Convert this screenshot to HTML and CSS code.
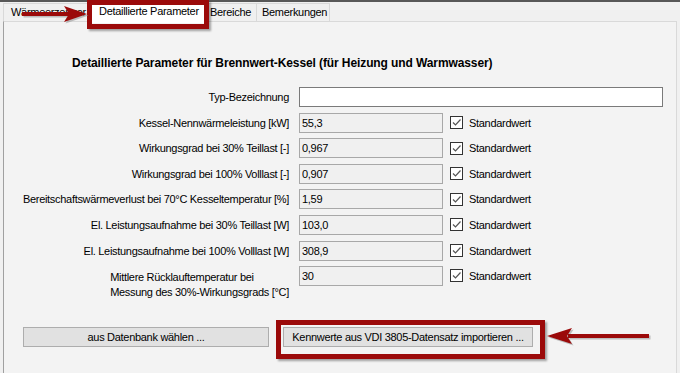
FILE: index.html
```html
<!DOCTYPE html>
<html lang="de">
<head>
    <meta charset="UTF-8">
    <title>Detaillierte Parameter</title>
    <link rel="stylesheet" href="styles.css">
</head>
<body>
    <div class="window">
        <div class="tabs">
            <div class="tab">Wärmeerzeuger</div>
            <div class="tab active">Detaillierte Parameter</div>
            <div class="tab">Bereiche</div>
            <div class="tab">Bemerkungen</div>
        </div>

        <div class="page">
            <h2 class="title">Detaillierte Parameter für Brennwert-Kessel (für Heizung und Warmwasser)</h2>

            <div class="rows">
                <div class="row">
                    <label class="lbl">Typ-Bezeichnung</label>
                    <input class="field wide" type="text" value="">
                </div>
                <div class="row">
                    <label class="lbl">Kessel-Nennwärmeleistung [kW]</label>
                    <input class="field" type="text" value="55,3" readonly>
                    <span class="check"><svg width="11" height="11" viewBox="0 0 11 11"><path d="M2 5.5 L4.5 8 L9.5 2.5" fill="none" stroke="#555" stroke-width="1.2"/></svg></span>
                    <span class="std">Standardwert</span>
                </div>
                <div class="row">
                    <label class="lbl">Wirkungsgrad bei 30% Teillast [-]</label>
                    <input class="field" type="text" value="0,967" readonly>
                    <span class="check"><svg width="11" height="11" viewBox="0 0 11 11"><path d="M2 5.5 L4.5 8 L9.5 2.5" fill="none" stroke="#555" stroke-width="1.2"/></svg></span>
                    <span class="std">Standardwert</span>
                </div>
                <div class="row">
                    <label class="lbl">Wirkungsgrad bei 100% Volllast [-]</label>
                    <input class="field" type="text" value="0,907" readonly>
                    <span class="check"><svg width="11" height="11" viewBox="0 0 11 11"><path d="M2 5.5 L4.5 8 L9.5 2.5" fill="none" stroke="#555" stroke-width="1.2"/></svg></span>
                    <span class="std">Standardwert</span>
                </div>
                <div class="row">
                    <label class="lbl">Bereitschaftswärmeverlust bei 70°C Kesseltemperatur [%]</label>
                    <input class="field" type="text" value="1,59" readonly>
                    <span class="check"><svg width="11" height="11" viewBox="0 0 11 11"><path d="M2 5.5 L4.5 8 L9.5 2.5" fill="none" stroke="#555" stroke-width="1.2"/></svg></span>
                    <span class="std">Standardwert</span>
                </div>
                <div class="row">
                    <label class="lbl">El. Leistungsaufnahme bei 30% Teillast [W]</label>
                    <input class="field" type="text" value="103,0" readonly>
                    <span class="check"><svg width="11" height="11" viewBox="0 0 11 11"><path d="M2 5.5 L4.5 8 L9.5 2.5" fill="none" stroke="#555" stroke-width="1.2"/></svg></span>
                    <span class="std">Standardwert</span>
                </div>
                <div class="row">
                    <label class="lbl">El. Leistungsaufnahme bei 100% Volllast [W]</label>
                    <input class="field" type="text" value="308,9" readonly>
                    <span class="check"><svg width="11" height="11" viewBox="0 0 11 11"><path d="M2 5.5 L4.5 8 L9.5 2.5" fill="none" stroke="#555" stroke-width="1.2"/></svg></span>
                    <span class="std">Standardwert</span>
                </div>
                <div class="row tall">
                    <label class="lbl multi"><span>Mittlere Rücklauftemperatur bei<br>Messung des 30%-Wirkungsgrads [°C]</span></label>
                    <input class="field" type="text" value="30" readonly>
                    <span class="check"><svg width="11" height="11" viewBox="0 0 11 11"><path d="M2 5.5 L4.5 8 L9.5 2.5" fill="none" stroke="#555" stroke-width="1.2"/></svg></span>
                    <span class="std">Standardwert</span>
                </div>
            </div>

            <div class="buttons">
                <button class="btn db">aus Datenbank wählen ...</button>
                <button class="btn vdi">Kennwerte aus VDI 3805-Datensatz importieren ...</button>
            </div>
        </div>

        <!-- annotations drawn over the screenshot -->
        <div class="mark mark-tab"></div>
        <div class="mark mark-btn"></div>
        <svg class="arrow arrow-top" width="92" height="26" viewBox="0 0 92 26">
            <g transform="translate(1.5,1.5)" fill="#9a9a9a" opacity="0.6">
                <rect x="22" y="10" width="48" height="4"/>
                <polygon points="64,4 87,12 64,20 69,12"/>
            </g>
            <g fill="#9b0a0a">
                <rect x="22" y="10" width="48" height="4"/>
                <polygon points="64,4 87,12 64,20 69,12"/>
            </g>
        </svg>
        <svg class="arrow arrow-bottom" width="110" height="26" viewBox="0 0 110 26">
            <g transform="translate(1.5,1.5)" fill="#9a9a9a" opacity="0.6">
                <rect x="22" y="10" width="81" height="4"/>
                <polygon points="26,4 1,12 26,20 21,12"/>
            </g>
            <g fill="#9b0a0a">
                <rect x="22" y="10" width="81" height="4"/>
                <polygon points="26,4 1,12 26,20 21,12"/>
            </g>
        </svg>
    </div>
</body>
</html>
```

FILE: styles.css
```css
html, body {
    margin: 0;
    padding: 0;
}
body {
    background-color: #f0f0f0;
    font-family: "Liberation Sans", Arial, sans-serif;
    font-size: 11px;
    letter-spacing: -0.3px;
    color: #000;
    overflow: hidden;
}
.window {
    position: relative;
    width: 680px;
    height: 373px;
    border-top: 2px solid #585858;
    box-sizing: border-box;
}
.tabs {
    display: flex;
    align-items: flex-end;
    height: 19px;
    padding-left: 3px;
}
.tab {
    height: 18px;
    line-height: 17px;
    box-sizing: border-box;
    padding: 0 6px;
    border: 1px solid #d9d9d9;
    border-bottom: none;
    background-color: #f0f0f0;
    margin-right: -1px;
    white-space: nowrap;
    overflow: hidden;
}
.tab:nth-child(1) { width: 87px; padding-left: 7px; }
.tab:nth-child(3) { width: 51px; padding-left: 3px; }
.tab:nth-child(4) { width: 74px; padding-left: 5px; }
.tab.active {
    width: 118px;
    height: 22px;
    margin-bottom: -2px;
    background-color: #fff;
    padding-left: 9px;
    line-height: 18px;
    position: relative;
    z-index: 1;
}
.page {
    margin: 0 3px;
    height: 360px;
    background-color: #f3f3f3;
    border: 1px solid #d9d9d9;
    border-left-color: #a0a0a0;
    box-sizing: border-box;
}
.title {
    margin: 34px 0 0 68px;
    font-size: 12px;
    letter-spacing: -0.1px;
    line-height: 15px;
    font-weight: bold;
}
.rows {
    margin-top: 16px;
    display: flex;
    flex-direction: column;
    gap: 5.6px;
}
.row {
    display: flex;
    align-items: center;
    height: 20px;
}
.row.tall {
    align-items: flex-start;
    height: 34px;
}
.lbl {
    width: 285px;
    text-align: right;
    line-height: 20px;
    white-space: nowrap;
}
.lbl.multi {
    line-height: 15px;
    padding-top: 4px;
}
.lbl.multi span {
    display: inline-block;
    text-align: left;
}
.field {
    margin: 0 0 0 10px;
    width: 144px;
    height: 20px;
    box-sizing: border-box;
    border: 1px solid #a8a8a8;
    background-color: #f0f0f0;
    padding: 0 2px;
    font-family: "Liberation Sans", Arial, sans-serif;
    font-size: 11px;
    letter-spacing: -0.3px;
    color: #000;
    outline: none;
}
.field.wide {
    width: 364px;
    background-color: #fff;
    border-color: #7a7a7a;
}
.check {
    margin-left: 7px;
    width: 13px;
    height: 13px;
    box-sizing: border-box;
    border: 1px solid #333;
    background-color: #fff;
    display: flex;
    align-items: center;
    justify-content: center;
}
.row.tall .check {
    margin-top: 3px;
}
.row.tall .std {
    line-height: 20px;
}
.std {
    margin-left: 6px;
}
.buttons {
    display: flex;
    gap: 14px;
    margin: 27px 0 0 19px;
}
.btn {
    height: 20px;
    box-sizing: border-box;
    background-color: #e1e1e1;
    border: 1px solid #adadad;
    font-family: "Liberation Sans", Arial, sans-serif;
    font-size: 11px;
    letter-spacing: -0.3px;
    color: #000;
    padding: 0;
}
.btn.db { width: 246px; }
.btn.vdi { width: 250px; }
.mark {
    position: absolute;
    border: 5px solid #9b0a0a;
    box-shadow: 2px 2px 2px rgba(0, 0, 0, 0.35);
    z-index: 2;
}
.mark-tab {
    left: 87px;
    top: -2px;
    width: 112px;
    height: 19px;
}
.mark-btn {
    left: 276px;
    top: 318px;
    width: 259px;
    height: 29px;
}
.arrow {
    position: absolute;
    z-index: 3;
}
.arrow-top {
    left: 0;
    top: 0;
}
.arrow-bottom {
    left: 546px;
    top: 322px;
}
```
